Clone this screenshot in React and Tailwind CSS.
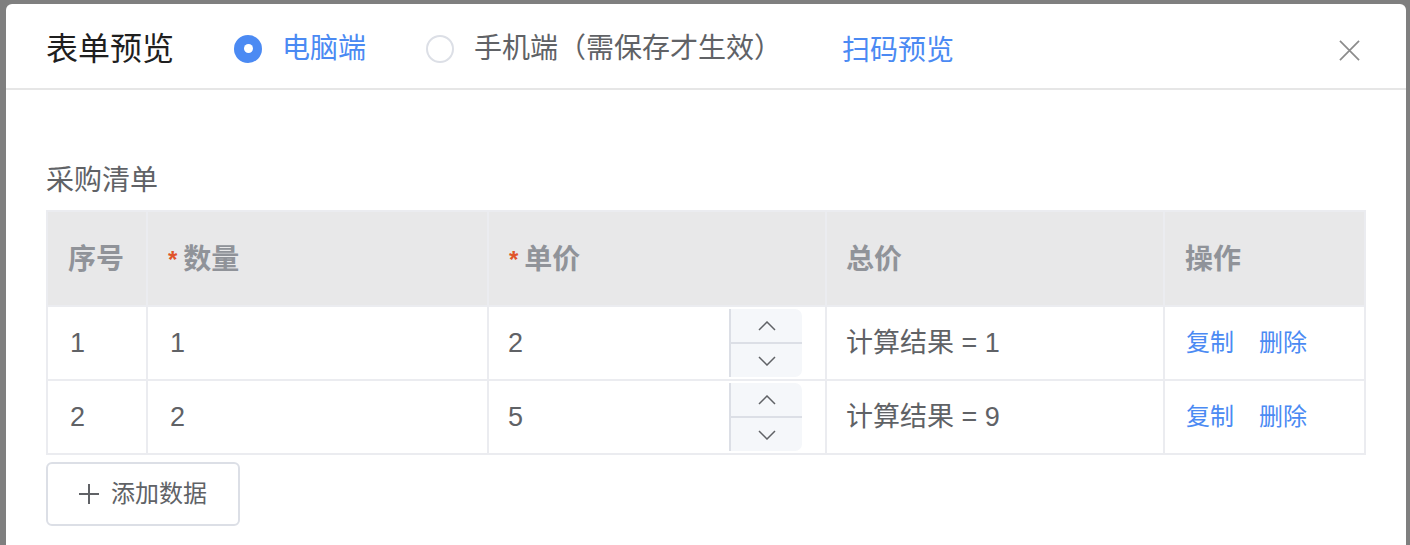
import React from 'react';

const font = { fontFamily: '"Liberation Sans", "Noto Sans CJK SC", sans-serif' };

function Chevron({ up }) {
  return (
    <svg width="18" height="10" viewBox="0 0 18 10" fill="none" stroke="#606266" strokeWidth="1.5">
      <path d={up ? 'M1 9L9 1l8 8' : 'M1 1l8 8 8-8'} />
    </svg>
  );
}

function Stepper() {
  return (
    <div className="flex flex-col w-[73px] h-[68px] bg-[#f5f7fa] border-l-2 border-[#dcdfe6] rounded-r-[7px] overflow-hidden">
      <div className="flex-1 flex items-center justify-center border-b-2 border-[#dcdfe6]">
        <Chevron up />
      </div>
      <div className="flex-1 flex items-center justify-center">
        <Chevron />
      </div>
    </div>
  );
}

const rows = [
  { idx: 1, qty: 1, price: 2, total: 1 },
  { idx: 2, qty: 2, price: 5, total: 9 },
];

export default function App() {
  return (
    <div className="min-h-screen bg-[#7f7f7f] pt-[4px] pl-[6px] overflow-hidden" style={font}>
      <div className="w-[1400px] h-[600px] bg-white rounded-[6px]">
        {/* header */}
        <div className="h-[86px] flex items-center pt-[5px] pl-[40px] pr-[46px] border-b-2 border-[#e6e6e6]">
          <div className="text-[32px] text-[#1f1f1f] leading-none">表单预览</div>
          <div className="flex items-center ml-[60px]">
            <span className="w-[28px] h-[28px] rounded-full bg-[#4b8af3] flex items-center justify-center">
              <span className="w-[9px] h-[9px] rounded-full bg-white" />
            </span>
            <span className="ml-[20px] text-[28px] text-[#4b8af3] leading-none">电脑端</span>
          </div>
          <div className="flex items-center ml-[60px]">
            <span className="w-[28px] h-[28px] rounded-full border-2 border-[#dcdfe6]" />
            <span className="ml-[20px] text-[28px] text-[#606266] leading-none">手机端（需保存才生效）</span>
          </div>
          <div className="ml-[60px] text-[28px] text-[#4b8af3] leading-none pt-[4px]">扫码预览</div>
          <div className="ml-auto pt-[3px]">
            <svg width="21" height="21" viewBox="0 0 22 22" stroke="#8c8c8c" strokeWidth="1.8">
              <path d="M1 1l20 20M21 1L1 21" />
            </svg>
          </div>
        </div>

        {/* body */}
        <div className="pl-[40px] pt-[71px]">
          <div className="text-[28px] leading-[40px] text-[#606266] mb-[9px]">采购清单</div>

          <div className="w-[1320px] bg-[#ebecf0] p-[2px] grid grid-cols-[98px_339px_336px_336px_199px] gap-[2px]">
            <div className="h-[93px] bg-[#e8e8e9] flex items-center pt-[3px] pl-[20px] text-[28px] font-bold text-[#909399]">序号</div>
            <div className="h-[93px] bg-[#e8e8e9] flex items-center pt-[3px] pl-[20px] text-[28px] font-bold text-[#909399]">
              <span className="text-[#e0542a] mr-[6px] text-[24px]">*</span>数量
            </div>
            <div className="h-[93px] bg-[#e8e8e9] flex items-center pt-[3px] pl-[20px] text-[28px] font-bold text-[#909399]">
              <span className="text-[#e0542a] mr-[6px] text-[24px]">*</span>单价
            </div>
            <div className="h-[93px] bg-[#e8e8e9] flex items-center pt-[3px] pl-[19px] text-[28px] font-bold text-[#909399]">总价</div>
            <div className="h-[93px] bg-[#e8e8e9] flex items-center pt-[3px] pl-[20px] text-[28px] font-bold text-[#909399]">操作</div>

            {rows.map((r) => (
              <React.Fragment key={r.idx}>
                <div className="h-[72px] bg-white flex items-center pl-[22px] text-[27px] text-[#606266]">{r.idx}</div>
                <div className="h-[72px] bg-white flex items-center pl-[22px] text-[27px] text-[#606266]">{r.qty}</div>
                <div className="h-[72px] bg-white flex items-center pl-[19px] pr-[23px] text-[27px] text-[#606266]">
                  <span className="flex-1">{r.price}</span>
                  <Stepper />
                </div>
                <div className="h-[72px] bg-white flex items-center pl-[19px] text-[27px] text-[#606266]">
                  计算结果 = {r.total}
                </div>
                <div className="h-[72px] bg-white flex items-center pl-[21px] gap-[25px] text-[24px] text-[#4b8af3]">
                  <span>复制</span>
                  <span>删除</span>
                </div>
              </React.Fragment>
            ))}
          </div>

          <button className="mt-[7px] w-[194px] h-[64px] border-2 border-[#dcdfe6] rounded-[6px] flex items-center justify-center gap-[12px] text-[24px] text-[#606266]">
            <svg width="20" height="20" viewBox="0 0 20 20" stroke="#606266" strokeWidth="2">
              <path d="M10 0v20M0 10h20" />
            </svg>
            <span>添加数据</span>
          </button>
        </div>
      </div>
    </div>
  );
}
